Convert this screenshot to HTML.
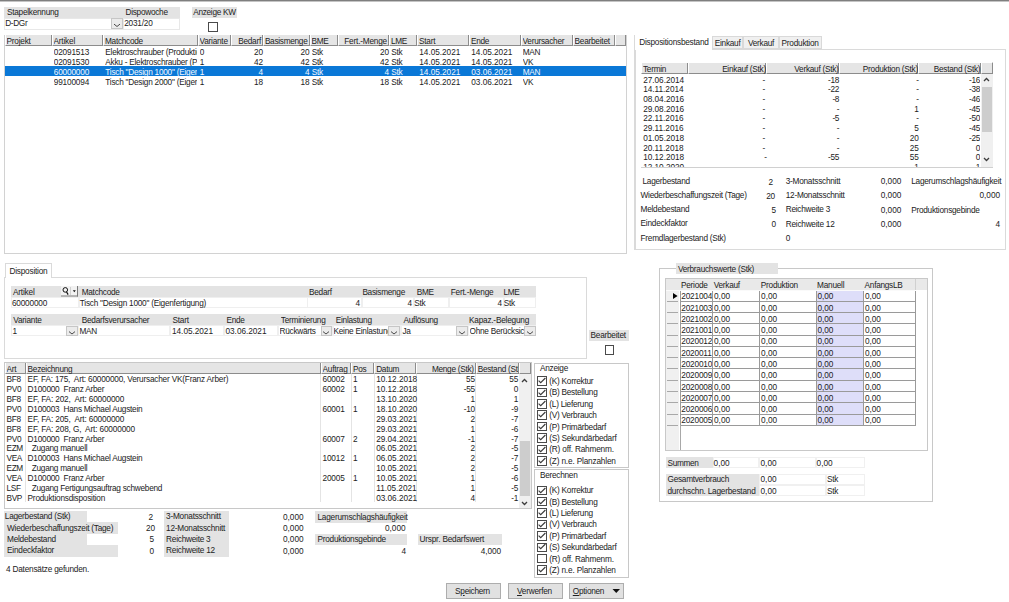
<!DOCTYPE html>
<html><head><meta charset="utf-8"><title>Disposition</title>
<style>
html,body{margin:0;padding:0;background:#fff;width:1009px;height:602px;overflow:hidden;position:relative;}
.r{position:absolute;}
.t{position:absolute;white-space:nowrap;font-family:"Liberation Sans",sans-serif;font-size:8.25px;line-height:10px;color:#222;}
</style></head><body>
<div class="r" style="left:0px;top:0px;width:1009px;height:1px;background:#7f7f7f;"></div>
<div class="r" style="left:0px;top:1px;width:1009px;height:1px;background:#c4c4c4;"></div>
<div class="r" style="left:4px;top:7px;width:176px;height:11px;background:#e3e3e3;"></div>
<div class="t" style="top:7.90px;left:7px;letter-spacing:-0.26px;">Stapelkennung</div>
<div class="t" style="top:7.90px;left:125.5px;letter-spacing:-0.27px;">Dispowoche</div>
<div class="r" style="left:4px;top:18px;width:119px;height:12px;background:#fff;border:1px solid #e8e8e8;box-sizing:border-box;"></div>
<div class="r" style="left:123px;top:18px;width:57px;height:12px;background:#fff;border:1px solid #e8e8e8;box-sizing:border-box;"></div>
<div class="r" style="left:111px;top:18px;width:12px;height:11px;background:#ebebeb;border:1px solid #c6c6c6;box-sizing:border-box;"></div>
<svg class="r" style="left:111px;top:18px" width="12" height="11"><path d="M3.00 6.10 L6.00 8.50 L9.00 6.10" fill="none" stroke="#4a4a4a" stroke-width="1.0"/></svg>
<div class="t" style="top:19.10px;left:5.2px;letter-spacing:-0.33px;">D-DGr</div>
<div class="t" style="top:19.10px;left:124.2px;letter-spacing:-0.20px;">2031/20</div>
<div class="r" style="left:192px;top:7px;width:45px;height:11px;background:#e3e3e3;"></div>
<div class="t" style="top:7.90px;left:193.2px;letter-spacing:-0.28px;">Anzeige KW</div>
<div class="r" style="left:208px;top:22px;width:10px;height:10px;background:#fff;border:1px solid #4a4a4a;box-sizing:border-box;"></div>
<div class="r" style="left:4px;top:35px;width:623px;height:219px;background:#fff;border:1px solid #d2d2d2;box-sizing:border-box;border-top:none;"></div>
<div class="r" style="left:5px;top:35px;width:47px;height:11px;background:#e5e5e5;border-right:1px solid #8c8c8c;border-bottom:1px solid #8c8c8c;border-left:1px solid #fff;box-sizing:border-box;"></div>
<div class="t" style="top:37.10px;left:6.5px;letter-spacing:-0.22px;width:44.0px;overflow:hidden;">Projekt</div>
<div class="r" style="left:52px;top:35px;width:51px;height:11px;background:#e5e5e5;border-right:1px solid #8c8c8c;border-bottom:1px solid #8c8c8c;border-left:1px solid #fff;box-sizing:border-box;"></div>
<div class="t" style="top:37.10px;left:53.5px;letter-spacing:-0.20px;width:48.5px;overflow:hidden;">Artikel</div>
<div class="r" style="left:103px;top:35px;width:95px;height:11px;background:#e5e5e5;border-right:1px solid #8c8c8c;border-bottom:1px solid #8c8c8c;border-left:1px solid #fff;box-sizing:border-box;"></div>
<div class="t" style="top:37.10px;left:105px;letter-spacing:-0.27px;width:91.5px;overflow:hidden;">Matchcode</div>
<div class="r" style="left:198px;top:35px;width:33px;height:11px;background:#e5e5e5;border-right:1px solid #8c8c8c;border-bottom:1px solid #8c8c8c;border-left:1px solid #fff;box-sizing:border-box;"></div>
<div class="t" style="top:37.10px;left:199.5px;letter-spacing:-0.23px;width:30.5px;overflow:hidden;">Variante</div>
<div class="r" style="left:231px;top:35px;width:32px;height:11px;background:#e5e5e5;border-right:1px solid #8c8c8c;border-bottom:1px solid #8c8c8c;border-left:1px solid #fff;box-sizing:border-box;"></div>
<div class="t" style="top:37.10px;left:229.00px;width:32px;text-align:right;letter-spacing:-0.25px;">Bedarf</div>
<div class="r" style="left:263px;top:35px;width:47px;height:11px;background:#e5e5e5;border-right:1px solid #8c8c8c;border-bottom:1px solid #8c8c8c;border-left:1px solid #fff;box-sizing:border-box;"></div>
<div class="t" style="top:37.10px;left:261.00px;width:46.5px;text-align:right;letter-spacing:-0.28px;">Basismenge</div>
<div class="r" style="left:310px;top:35px;width:28px;height:11px;background:#e5e5e5;border-right:1px solid #8c8c8c;border-bottom:1px solid #8c8c8c;border-left:1px solid #fff;box-sizing:border-box;"></div>
<div class="t" style="top:37.10px;left:311.5px;letter-spacing:-0.36px;width:25.0px;overflow:hidden;">BME</div>
<div class="r" style="left:338px;top:35px;width:51px;height:11px;background:#e5e5e5;border-right:1px solid #8c8c8c;border-bottom:1px solid #8c8c8c;border-left:1px solid #fff;box-sizing:border-box;"></div>
<div class="t" style="top:37.10px;left:335.50px;width:51.5px;text-align:right;letter-spacing:-0.20px;">Fert.-Menge</div>
<div class="r" style="left:389px;top:35px;width:28px;height:11px;background:#e5e5e5;border-right:1px solid #8c8c8c;border-bottom:1px solid #8c8c8c;border-left:1px solid #fff;box-sizing:border-box;"></div>
<div class="t" style="top:37.10px;left:391px;letter-spacing:-0.34px;width:25px;overflow:hidden;">LME</div>
<div class="r" style="left:417px;top:35px;width:52px;height:11px;background:#e5e5e5;border-right:1px solid #8c8c8c;border-bottom:1px solid #8c8c8c;border-left:1px solid #fff;box-sizing:border-box;"></div>
<div class="t" style="top:37.10px;left:419px;letter-spacing:-0.21px;width:49px;overflow:hidden;">Start</div>
<div class="r" style="left:469px;top:35px;width:52px;height:11px;background:#e5e5e5;border-right:1px solid #8c8c8c;border-bottom:1px solid #8c8c8c;border-left:1px solid #fff;box-sizing:border-box;"></div>
<div class="t" style="top:37.10px;left:471px;letter-spacing:-0.29px;width:48.5px;overflow:hidden;">Ende</div>
<div class="r" style="left:521px;top:35px;width:52px;height:11px;background:#e5e5e5;border-right:1px solid #8c8c8c;border-bottom:1px solid #8c8c8c;border-left:1px solid #fff;box-sizing:border-box;"></div>
<div class="t" style="top:37.10px;left:522.5px;letter-spacing:-0.25px;width:49.0px;overflow:hidden;">Verursacher</div>
<div class="r" style="left:573px;top:35px;width:42px;height:11px;background:#e5e5e5;border-right:1px solid #8c8c8c;border-bottom:1px solid #8c8c8c;border-left:1px solid #fff;box-sizing:border-box;"></div>
<div class="t" style="top:37.10px;left:574.5px;letter-spacing:-0.23px;width:39.5px;overflow:hidden;">Bearbeitet</div>
<div class="r" style="left:615px;top:35px;width:11px;height:11px;background:#e5e5e5;border-right:1px solid #8c8c8c;border-bottom:1px solid #8c8c8c;border-left:1px solid #fff;box-sizing:border-box;"></div>
<div class="t" style="top:48.00px;left:53.8px;letter-spacing:-0.18px;width:48.7px;overflow:hidden;">02091513</div>
<div class="t" style="top:48.00px;left:105.3px;letter-spacing:-0.25px;width:91.7px;overflow:hidden;">Elektroschrauber (Produktion)</div>
<div class="t" style="top:48.00px;left:199.8px;letter-spacing:-0.18px;width:30.7px;overflow:hidden;">0</div>
<div class="t" style="top:48.00px;left:232.80px;width:30px;text-align:right;letter-spacing:-0.18px;">20</div>
<div class="t" style="top:48.00px;left:264.80px;width:44.5px;text-align:right;letter-spacing:-0.18px;">20</div>
<div class="t" style="top:48.00px;left:311.8px;letter-spacing:-0.24px;width:25.2px;overflow:hidden;">Stk</div>
<div class="t" style="top:48.00px;left:339.30px;width:49.5px;text-align:right;letter-spacing:-0.18px;">20</div>
<div class="t" style="top:48.00px;left:391.3px;letter-spacing:-0.24px;width:25.2px;overflow:hidden;">Stk</div>
<div class="t" style="top:48.00px;left:419.3px;letter-spacing:-0.03px;width:49.2px;overflow:hidden;">14.05.2021</div>
<div class="t" style="top:48.00px;left:471.3px;letter-spacing:-0.03px;width:48.7px;overflow:hidden;">14.05.2021</div>
<div class="t" style="top:48.00px;left:522.8px;letter-spacing:-0.37px;width:49.2px;overflow:hidden;">MAN</div>
<div class="t" style="top:57.85px;left:53.8px;letter-spacing:-0.18px;width:48.7px;overflow:hidden;">02091530</div>
<div class="t" style="top:57.85px;left:105.3px;letter-spacing:-0.25px;width:91.7px;overflow:hidden;">Akku - Elektroschrauber (Produktion)</div>
<div class="t" style="top:57.85px;left:199.8px;letter-spacing:-0.18px;width:30.7px;overflow:hidden;">1</div>
<div class="t" style="top:57.85px;left:232.80px;width:30px;text-align:right;letter-spacing:-0.18px;">42</div>
<div class="t" style="top:57.85px;left:264.80px;width:44.5px;text-align:right;letter-spacing:-0.18px;">42</div>
<div class="t" style="top:57.85px;left:311.8px;letter-spacing:-0.24px;width:25.2px;overflow:hidden;">Stk</div>
<div class="t" style="top:57.85px;left:339.30px;width:49.5px;text-align:right;letter-spacing:-0.18px;">42</div>
<div class="t" style="top:57.85px;left:391.3px;letter-spacing:-0.24px;width:25.2px;overflow:hidden;">Stk</div>
<div class="t" style="top:57.85px;left:419.3px;letter-spacing:-0.03px;width:49.2px;overflow:hidden;">14.05.2021</div>
<div class="t" style="top:57.85px;left:471.3px;letter-spacing:-0.03px;width:48.7px;overflow:hidden;">14.05.2021</div>
<div class="t" style="top:57.85px;left:522.8px;letter-spacing:-0.34px;width:49.2px;overflow:hidden;">VK</div>
<div class="r" style="left:5px;top:66px;width:621px;height:10px;background:#0a78d7;"></div>
<div class="t" style="top:67.70px;left:53.8px;color:#f4f8ff;letter-spacing:-0.18px;width:48.7px;overflow:hidden;">60000000</div>
<div class="t" style="top:67.70px;left:105.3px;color:#f4f8ff;letter-spacing:-0.24px;width:91.7px;overflow:hidden;">Tisch &quot;Design 1000&quot; (Eigenfertigung)</div>
<div class="t" style="top:67.70px;left:199.8px;color:#f4f8ff;letter-spacing:-0.18px;width:30.7px;overflow:hidden;">1</div>
<div class="t" style="top:67.70px;left:232.80px;width:30px;text-align:right;color:#f4f8ff;letter-spacing:-0.18px;">4</div>
<div class="t" style="top:67.70px;left:264.80px;width:44.5px;text-align:right;color:#f4f8ff;letter-spacing:-0.18px;">4</div>
<div class="t" style="top:67.70px;left:311.8px;color:#f4f8ff;letter-spacing:-0.24px;width:25.2px;overflow:hidden;">Stk</div>
<div class="t" style="top:67.70px;left:339.30px;width:49.5px;text-align:right;color:#f4f8ff;letter-spacing:-0.18px;">4</div>
<div class="t" style="top:67.70px;left:391.3px;color:#f4f8ff;letter-spacing:-0.24px;width:25.2px;overflow:hidden;">Stk</div>
<div class="t" style="top:67.70px;left:419.3px;color:#f4f8ff;letter-spacing:-0.03px;width:49.2px;overflow:hidden;">14.05.2021</div>
<div class="t" style="top:67.70px;left:471.3px;color:#f4f8ff;letter-spacing:-0.03px;width:48.7px;overflow:hidden;">03.06.2021</div>
<div class="t" style="top:67.70px;left:522.8px;color:#f4f8ff;letter-spacing:-0.37px;width:49.2px;overflow:hidden;">MAN</div>
<div class="t" style="top:77.55px;left:53.8px;letter-spacing:-0.18px;width:48.7px;overflow:hidden;">99100094</div>
<div class="t" style="top:77.55px;left:105.3px;letter-spacing:-0.24px;width:91.7px;overflow:hidden;">Tisch &quot;Design 2000&quot; (Eigenfertigung)</div>
<div class="t" style="top:77.55px;left:199.8px;letter-spacing:-0.18px;width:30.7px;overflow:hidden;">1</div>
<div class="t" style="top:77.55px;left:232.80px;width:30px;text-align:right;letter-spacing:-0.18px;">18</div>
<div class="t" style="top:77.55px;left:264.80px;width:44.5px;text-align:right;letter-spacing:-0.18px;">18</div>
<div class="t" style="top:77.55px;left:311.8px;letter-spacing:-0.24px;width:25.2px;overflow:hidden;">Stk</div>
<div class="t" style="top:77.55px;left:339.30px;width:49.5px;text-align:right;letter-spacing:-0.18px;">18</div>
<div class="t" style="top:77.55px;left:391.3px;letter-spacing:-0.24px;width:25.2px;overflow:hidden;">Stk</div>
<div class="t" style="top:77.55px;left:419.3px;letter-spacing:-0.03px;width:49.2px;overflow:hidden;">14.05.2021</div>
<div class="t" style="top:77.55px;left:471.3px;letter-spacing:-0.03px;width:48.7px;overflow:hidden;">03.06.2021</div>
<div class="t" style="top:77.55px;left:522.8px;letter-spacing:-0.34px;width:49.2px;overflow:hidden;">VK</div>
<div class="r" style="left:635px;top:49px;width:371px;height:201px;background:#fff;border:1px solid #dadada;box-sizing:border-box;"></div>
<div class="r" style="left:635px;top:49px;width:77px;height:1px;background:#fff;"></div>
<div class="r" style="left:634px;top:35px;width:1px;height:215px;background:#dadada;"></div>
<div class="t" style="top:38.10px;left:639.3px;letter-spacing:-0.24px;">Dispositionsbestand</div>
<div class="r" style="left:712px;top:36px;width:31px;height:13px;background:#f0f0f0;border:1px solid #d9d9d9;box-sizing:border-box;"></div>
<div class="t" style="top:39.10px;left:711.8px;width:31.600000000000023px;text-align:center;letter-spacing:-0.24px;">Einkauf</div>
<div class="r" style="left:743px;top:36px;width:36px;height:13px;background:#f0f0f0;border:1px solid #d9d9d9;box-sizing:border-box;"></div>
<div class="t" style="top:39.10px;left:743.3999999999999px;width:35.30000000000007px;text-align:center;letter-spacing:-0.25px;">Verkauf</div>
<div class="r" style="left:779px;top:36px;width:43px;height:13px;background:#f0f0f0;border:1px solid #d9d9d9;box-sizing:border-box;"></div>
<div class="t" style="top:39.10px;left:778.7px;width:42.799999999999955px;text-align:center;letter-spacing:-0.24px;">Produktion</div>
<div class="r" style="left:641px;top:62px;width:352px;height:106px;background:#fff;border:1px solid #d0d0d0;box-sizing:border-box;border-left:none;border-top:none;"></div>
<div class="r" style="left:641px;top:63px;width:47px;height:11px;background:#e5e5e5;border-right:1px solid #8c8c8c;border-bottom:1px solid #8c8c8c;border-left:1px solid #fff;box-sizing:border-box;"></div>
<div class="t" style="top:64.60px;left:643px;letter-spacing:-0.26px;width:43.5px;overflow:hidden;">Termin</div>
<div class="r" style="left:688px;top:63px;width:78px;height:11px;background:#e5e5e5;border-right:1px solid #8c8c8c;border-bottom:1px solid #8c8c8c;border-left:1px solid #fff;box-sizing:border-box;"></div>
<div class="t" style="top:64.60px;left:687.10px;width:78.89999999999998px;text-align:right;letter-spacing:-0.26px;">Einkauf (Stk)</div>
<div class="r" style="left:766px;top:63px;width:73px;height:11px;background:#e5e5e5;border-right:1px solid #8c8c8c;border-bottom:1px solid #8c8c8c;border-left:1px solid #fff;box-sizing:border-box;"></div>
<div class="t" style="top:64.60px;left:766.00px;width:72.60000000000002px;text-align:right;letter-spacing:-0.26px;">Verkauf (Stk)</div>
<div class="r" style="left:839px;top:63px;width:79px;height:11px;background:#e5e5e5;border-right:1px solid #8c8c8c;border-bottom:1px solid #8c8c8c;border-left:1px solid #fff;box-sizing:border-box;"></div>
<div class="t" style="top:64.60px;left:838.60px;width:79.39999999999998px;text-align:right;letter-spacing:-0.25px;">Produktion (Stk)</div>
<div class="r" style="left:918px;top:63px;width:63px;height:11px;background:#e5e5e5;border-right:1px solid #8c8c8c;border-bottom:1px solid #8c8c8c;border-left:1px solid #fff;box-sizing:border-box;"></div>
<div class="t" style="top:64.60px;left:918.00px;width:62.30000000000007px;text-align:right;letter-spacing:-0.27px;">Bestand (Stk)</div>
<div class="r" style="left:981px;top:63px;width:12px;height:11px;background:#e5e5e5;border-right:1px solid #8c8c8c;border-bottom:1px solid #8c8c8c;border-left:1px solid #fff;box-sizing:border-box;"></div>
<div class="r" style="left:981px;top:74px;width:12px;height:93px;background:#f0f0f0;"></div>
<div class="r" style="left:982px;top:87px;width:10px;height:45px;background:#cdcdcd;"></div>
<svg class="r" style="left:981px;top:75px" width="11" height="10"><path d="M3 6 L5.5 3.5 L8 6" fill="none" stroke="#3c3c3c" stroke-width="1.3"/></svg>
<svg class="r" style="left:981px;top:154px" width="11" height="10"><path d="M3 4 L5.5 6.5 L8 4" fill="none" stroke="#3c3c3c" stroke-width="1.3"/></svg>
<div class="r" style="left:641px;top:73.5px;width:339px;height:93.5px;overflow:hidden;">
<div class="t" style="top:2.00px;left:2.2px;letter-spacing:-0.03px;">27.06.2014</div>
<div class="t" style="top:2.00px;left:47.90px;width:75.89999999999998px;text-align:right;letter-spacing:-0.36px;">-</div>
<div class="t" style="top:2.00px;left:128.60px;width:69.60000000000002px;text-align:right;letter-spacing:-0.24px;">-18</div>
<div class="t" style="top:2.00px;left:201.20px;width:76.39999999999998px;text-align:right;letter-spacing:-0.36px;">-</div>
<div class="t" style="top:2.00px;left:279.90px;width:59.30000000000007px;text-align:right;letter-spacing:-0.24px;">-16</div>
<div class="t" style="top:11.72px;left:2.2px;letter-spacing:-0.03px;">14.11.2014</div>
<div class="t" style="top:11.72px;left:47.90px;width:75.89999999999998px;text-align:right;letter-spacing:-0.36px;">-</div>
<div class="t" style="top:11.72px;left:128.60px;width:69.60000000000002px;text-align:right;letter-spacing:-0.24px;">-22</div>
<div class="t" style="top:11.72px;left:201.20px;width:76.39999999999998px;text-align:right;letter-spacing:-0.36px;">-</div>
<div class="t" style="top:11.72px;left:279.90px;width:59.30000000000007px;text-align:right;letter-spacing:-0.24px;">-38</div>
<div class="t" style="top:21.45px;left:2.2px;letter-spacing:-0.03px;">08.04.2016</div>
<div class="t" style="top:21.45px;left:47.90px;width:75.89999999999998px;text-align:right;letter-spacing:-0.36px;">-</div>
<div class="t" style="top:21.45px;left:128.60px;width:69.60000000000002px;text-align:right;letter-spacing:-0.27px;">-8</div>
<div class="t" style="top:21.45px;left:201.20px;width:76.39999999999998px;text-align:right;letter-spacing:-0.36px;">-</div>
<div class="t" style="top:21.45px;left:279.90px;width:59.30000000000007px;text-align:right;letter-spacing:-0.24px;">-46</div>
<div class="t" style="top:31.18px;left:2.2px;letter-spacing:-0.03px;">29.08.2016</div>
<div class="t" style="top:31.18px;left:47.90px;width:75.89999999999998px;text-align:right;letter-spacing:-0.36px;">-</div>
<div class="t" style="top:31.18px;left:128.60px;width:69.60000000000002px;text-align:right;letter-spacing:-0.36px;">-</div>
<div class="t" style="top:31.18px;left:201.20px;width:76.39999999999998px;text-align:right;letter-spacing:-0.18px;">1</div>
<div class="t" style="top:31.18px;left:279.90px;width:59.30000000000007px;text-align:right;letter-spacing:-0.24px;">-45</div>
<div class="t" style="top:40.90px;left:2.2px;letter-spacing:-0.03px;">22.11.2016</div>
<div class="t" style="top:40.90px;left:47.90px;width:75.89999999999998px;text-align:right;letter-spacing:-0.36px;">-</div>
<div class="t" style="top:40.90px;left:128.60px;width:69.60000000000002px;text-align:right;letter-spacing:-0.27px;">-5</div>
<div class="t" style="top:40.90px;left:201.20px;width:76.39999999999998px;text-align:right;letter-spacing:-0.36px;">-</div>
<div class="t" style="top:40.90px;left:279.90px;width:59.30000000000007px;text-align:right;letter-spacing:-0.24px;">-50</div>
<div class="t" style="top:50.63px;left:2.2px;letter-spacing:-0.03px;">29.11.2016</div>
<div class="t" style="top:50.63px;left:47.90px;width:75.89999999999998px;text-align:right;letter-spacing:-0.36px;">-</div>
<div class="t" style="top:50.63px;left:128.60px;width:69.60000000000002px;text-align:right;letter-spacing:-0.36px;">-</div>
<div class="t" style="top:50.63px;left:201.20px;width:76.39999999999998px;text-align:right;letter-spacing:-0.18px;">5</div>
<div class="t" style="top:50.63px;left:279.90px;width:59.30000000000007px;text-align:right;letter-spacing:-0.24px;">-45</div>
<div class="t" style="top:60.35px;left:2.2px;letter-spacing:-0.03px;">01.05.2018</div>
<div class="t" style="top:60.35px;left:47.90px;width:75.89999999999998px;text-align:right;letter-spacing:-0.36px;">-</div>
<div class="t" style="top:60.35px;left:128.60px;width:69.60000000000002px;text-align:right;letter-spacing:-0.36px;">-</div>
<div class="t" style="top:60.35px;left:201.20px;width:76.39999999999998px;text-align:right;letter-spacing:-0.18px;">20</div>
<div class="t" style="top:60.35px;left:279.90px;width:59.30000000000007px;text-align:right;letter-spacing:-0.24px;">-25</div>
<div class="t" style="top:70.08px;left:2.2px;letter-spacing:-0.03px;">20.11.2018</div>
<div class="t" style="top:70.08px;left:47.90px;width:75.89999999999998px;text-align:right;letter-spacing:-0.36px;">-</div>
<div class="t" style="top:70.08px;left:128.60px;width:69.60000000000002px;text-align:right;letter-spacing:-0.36px;">-</div>
<div class="t" style="top:70.08px;left:201.20px;width:76.39999999999998px;text-align:right;letter-spacing:-0.18px;">25</div>
<div class="t" style="top:70.08px;left:279.90px;width:59.30000000000007px;text-align:right;letter-spacing:-0.18px;">0</div>
<div class="t" style="top:79.80px;left:2.2px;letter-spacing:-0.03px;">10.12.2018</div>
<div class="t" style="top:79.80px;left:49.70px;width:75.89999999999998px;text-align:right;letter-spacing:-0.36px;">-</div>
<div class="t" style="top:79.80px;left:128.60px;width:69.60000000000002px;text-align:right;letter-spacing:-0.24px;">-55</div>
<div class="t" style="top:79.80px;left:201.20px;width:76.39999999999998px;text-align:right;letter-spacing:-0.18px;">55</div>
<div class="t" style="top:79.80px;left:279.90px;width:59.30000000000007px;text-align:right;letter-spacing:-0.18px;">0</div>
<div class="t" style="top:89.53px;left:2.2px;letter-spacing:-0.03px;">12.10.2020</div>
<div class="t" style="top:89.53px;left:47.90px;width:75.89999999999998px;text-align:right;letter-spacing:-0.36px;">-</div>
<div class="t" style="top:89.53px;left:128.60px;width:69.60000000000002px;text-align:right;letter-spacing:-0.36px;">-</div>
<div class="t" style="top:89.53px;left:201.20px;width:76.39999999999998px;text-align:right;letter-spacing:-0.18px;">1</div>
<div class="t" style="top:89.53px;left:279.90px;width:59.30000000000007px;text-align:right;letter-spacing:-0.18px;">1</div>
</div>
<div class="t" style="top:176.80px;left:642.5px;letter-spacing:-0.26px;">Lagerbestand</div>
<div class="t" style="top:190.90px;left:640.6px;letter-spacing:-0.26px;">Wiederbeschaffungszeit (Tage)</div>
<div class="t" style="top:205.20px;left:640.6px;letter-spacing:-0.26px;">Meldebestand</div>
<div class="t" style="top:219.10px;left:640.6px;letter-spacing:-0.23px;">Eindeckfaktor</div>
<div class="t" style="top:233.60px;left:640.6px;letter-spacing:-0.26px;">Fremdlagerbestand (Stk)</div>
<div class="t" style="top:177.60px;left:743.00px;width:30px;text-align:right;letter-spacing:-0.18px;">2</div>
<div class="t" style="top:191.60px;left:745.00px;width:30px;text-align:right;letter-spacing:-0.18px;">20</div>
<div class="t" style="top:205.90px;left:746.00px;width:30px;text-align:right;letter-spacing:-0.18px;">5</div>
<div class="t" style="top:219.70px;left:746.00px;width:30px;text-align:right;letter-spacing:-0.18px;">0</div>
<div class="t" style="top:177.00px;left:785.7px;letter-spacing:-0.24px;">3-Monatsschnitt</div>
<div class="t" style="top:190.60px;left:785.7px;letter-spacing:-0.24px;">12-Monatsschnitt</div>
<div class="t" style="top:205.40px;left:785.7px;letter-spacing:-0.24px;">Reichweite 3</div>
<div class="t" style="top:219.70px;left:785.7px;letter-spacing:-0.23px;">Reichweite 12</div>
<div class="t" style="top:234.20px;left:785.7px;letter-spacing:-0.18px;">0</div>
<div class="t" style="top:177.30px;left:861.30px;width:40px;text-align:right;letter-spacing:-0.03px;">0,000</div>
<div class="t" style="top:191.10px;left:861.30px;width:40px;text-align:right;letter-spacing:-0.03px;">0,000</div>
<div class="t" style="top:205.90px;left:861.30px;width:40px;text-align:right;letter-spacing:-0.03px;">0,000</div>
<div class="t" style="top:220.10px;left:861.30px;width:40px;text-align:right;letter-spacing:-0.03px;">0,000</div>
<div class="t" style="top:177.00px;left:911.2px;letter-spacing:-0.24px;">Lagerumschlagshäufigkeit</div>
<div class="t" style="top:191.10px;left:960.00px;width:40px;text-align:right;letter-spacing:-0.03px;">0,000</div>
<div class="t" style="top:205.60px;left:911.2px;letter-spacing:-0.25px;">Produktionsgebinde</div>
<div class="t" style="top:219.90px;left:960.00px;width:40px;text-align:right;letter-spacing:-0.18px;">4</div>
<div class="r" style="left:4px;top:277px;width:583px;height:82px;background:#fff;border:1px solid #dadada;box-sizing:border-box;"></div>
<div class="r" style="left:5px;top:263px;width:47px;height:15px;background:#fff;border:1px solid #dadada;border-bottom:none;box-sizing:border-box;"></div>
<div class="t" style="top:266.90px;left:9.5px;letter-spacing:-0.22px;">Disposition</div>
<div class="r" style="left:11px;top:286px;width:525px;height:11px;background:#e3e3e3;"></div>
<div class="t" style="top:287.50px;left:13px;letter-spacing:-0.20px;">Artikel</div>
<svg class="r" style="left:61px;top:286px" width="18" height="11"><rect x="0" y="0" width="17" height="10.5" fill="#f2f2f2"/><path d="M16.5 0 V10.5 M0 10 H17" stroke="#7a7a7a" stroke-width="1" fill="none"/><path d="M9.5 1 V9" stroke="#d0d0d0" stroke-width="1"/><circle cx="4.3" cy="3.9" r="2.3" fill="none" stroke="#111" stroke-width="1"/><path d="M5.5 5.7 L7.1 8.6" stroke="#111" stroke-width="1.2"/><path d="M11.8 4.2 L14.8 4.2 L13.3 6.3 Z" fill="#111"/></svg>
<div class="t" style="top:287.50px;left:81.7px;letter-spacing:-0.27px;">Matchcode</div>
<div class="t" style="top:287.50px;left:309px;letter-spacing:-0.25px;">Bedarf</div>
<div class="t" style="top:287.50px;left:362.4px;letter-spacing:-0.28px;">Basismenge</div>
<div class="t" style="top:287.50px;left:416.8px;letter-spacing:-0.36px;">BME</div>
<div class="t" style="top:287.50px;left:450.7px;letter-spacing:-0.20px;">Fert.-Menge</div>
<div class="t" style="top:287.50px;left:503.5px;letter-spacing:-0.34px;">LME</div>
<div class="r" style="left:11px;top:297px;width:68px;height:11px;background:#fff;border:1px solid #efefef;box-sizing:border-box;"></div>
<div class="r" style="left:79px;top:297px;width:229px;height:11px;background:#fff;border:1px solid #efefef;box-sizing:border-box;"></div>
<div class="r" style="left:307px;top:297px;width:55px;height:11px;background:#fff;border:1px solid #efefef;box-sizing:border-box;"></div>
<div class="r" style="left:362px;top:297px;width:52px;height:11px;background:#fff;border:1px solid #efefef;box-sizing:border-box;"></div>
<div class="r" style="left:414px;top:297px;width:35px;height:11px;background:#fff;border:1px solid #efefef;box-sizing:border-box;"></div>
<div class="r" style="left:449px;top:297px;width:55px;height:11px;background:#fff;border:1px solid #efefef;box-sizing:border-box;"></div>
<div class="r" style="left:504px;top:297px;width:32px;height:11px;background:#fff;border:1px solid #efefef;box-sizing:border-box;"></div>
<div class="t" style="top:298.70px;left:11.9px;letter-spacing:-0.18px;">60000000</div>
<div class="t" style="top:298.70px;left:79.8px;letter-spacing:-0.24px;">Tisch &quot;Design 1000&quot; (Eigenfertigung)</div>
<div class="t" style="top:298.70px;left:320.00px;width:40px;text-align:right;letter-spacing:-0.18px;">4</div>
<div class="t" style="top:298.70px;left:372.00px;width:40px;text-align:right;letter-spacing:-0.18px;">4</div>
<div class="t" style="top:298.70px;left:414.2px;letter-spacing:-0.24px;">Stk</div>
<div class="t" style="top:298.70px;left:462.00px;width:40px;text-align:right;letter-spacing:-0.18px;">4</div>
<div class="t" style="top:298.70px;left:503.8px;letter-spacing:-0.24px;">Stk</div>
<div class="r" style="left:11px;top:314px;width:525px;height:11px;background:#e3e3e3;"></div>
<div class="t" style="top:316.00px;left:13.3px;letter-spacing:-0.23px;">Variante</div>
<div class="t" style="top:316.00px;left:81.7px;letter-spacing:-0.24px;">Bedarfsverursacher</div>
<div class="t" style="top:316.00px;left:172.5px;letter-spacing:-0.21px;">Start</div>
<div class="t" style="top:316.00px;left:226.5px;letter-spacing:-0.29px;">Ende</div>
<div class="t" style="top:316.00px;left:280.8px;letter-spacing:-0.25px;width:53px;overflow:hidden;">Terminierung</div>
<div class="t" style="top:316.00px;left:335.7px;letter-spacing:-0.24px;">Einlastung</div>
<div class="t" style="top:316.00px;left:403.5px;letter-spacing:-0.25px;">Auflösung</div>
<div class="t" style="top:316.00px;left:469px;letter-spacing:-0.22px;">Kapaz.-Belegung</div>
<div class="r" style="left:11px;top:325px;width:67px;height:11px;background:#fff;border:1px solid #efefef;box-sizing:border-box;"></div>
<div class="r" style="left:78px;top:325px;width:92px;height:11px;background:#fff;border:1px solid #efefef;box-sizing:border-box;"></div>
<div class="r" style="left:170px;top:325px;width:54px;height:11px;background:#fff;border:1px solid #efefef;box-sizing:border-box;"></div>
<div class="r" style="left:224px;top:325px;width:54px;height:11px;background:#fff;border:1px solid #efefef;box-sizing:border-box;"></div>
<div class="r" style="left:278px;top:325px;width:55px;height:11px;background:#fff;border:1px solid #efefef;box-sizing:border-box;"></div>
<div class="r" style="left:333px;top:325px;width:68px;height:11px;background:#fff;border:1px solid #efefef;box-sizing:border-box;"></div>
<div class="r" style="left:401px;top:325px;width:67px;height:11px;background:#fff;border:1px solid #efefef;box-sizing:border-box;"></div>
<div class="r" style="left:468px;top:325px;width:68px;height:11px;background:#fff;border:1px solid #efefef;box-sizing:border-box;"></div>
<div class="t" style="top:327.10px;left:12.5px;letter-spacing:-0.18px;">1</div>
<div class="t" style="top:327.10px;left:79.5px;letter-spacing:-0.37px;">MAN</div>
<div class="t" style="top:327.10px;left:172px;letter-spacing:-0.03px;">14.05.2021</div>
<div class="t" style="top:327.10px;left:225.5px;letter-spacing:-0.03px;">03.06.2021</div>
<div class="t" style="top:327.10px;left:279.5px;letter-spacing:-0.26px;width:40px;overflow:hidden;">Rückwärts</div>
<div class="t" style="top:327.10px;left:333.5px;letter-spacing:-0.24px;width:55px;overflow:hidden;">Keine Einlastung</div>
<div class="t" style="top:327.10px;left:402.5px;letter-spacing:-0.27px;">Ja</div>
<div class="t" style="top:327.10px;left:469.5px;letter-spacing:-0.25px;width:54.5px;overflow:hidden;">Ohne Berücksichtigung</div>
<div class="r" style="left:66px;top:326px;width:12px;height:10px;background:#ebebeb;border:1px solid #c6c6c6;box-sizing:border-box;"></div>
<svg class="r" style="left:66px;top:326px" width="12" height="10"><path d="M3.00 5.60 L6.00 8.00 L9.00 5.60" fill="none" stroke="#4a4a4a" stroke-width="1.0"/></svg>
<div class="r" style="left:321px;top:326px;width:11px;height:10px;background:#ebebeb;border:1px solid #c6c6c6;box-sizing:border-box;"></div>
<svg class="r" style="left:320px;top:326px" width="12" height="10"><path d="M3.00 5.60 L6.00 8.00 L9.00 5.60" fill="none" stroke="#4a4a4a" stroke-width="1.0"/></svg>
<div class="r" style="left:388px;top:326px;width:12px;height:10px;background:#ebebeb;border:1px solid #c6c6c6;box-sizing:border-box;"></div>
<svg class="r" style="left:388px;top:326px" width="12" height="10"><path d="M3.00 5.60 L6.00 8.00 L9.00 5.60" fill="none" stroke="#4a4a4a" stroke-width="1.0"/></svg>
<div class="r" style="left:456px;top:326px;width:12px;height:10px;background:#ebebeb;border:1px solid #c6c6c6;box-sizing:border-box;"></div>
<svg class="r" style="left:456px;top:326px" width="12" height="10"><path d="M3.00 5.60 L6.00 8.00 L9.00 5.60" fill="none" stroke="#4a4a4a" stroke-width="1.0"/></svg>
<div class="r" style="left:524px;top:326px;width:12px;height:10px;background:#ebebeb;border:1px solid #c6c6c6;box-sizing:border-box;"></div>
<svg class="r" style="left:524px;top:326px" width="12" height="10"><path d="M3.00 5.60 L6.00 8.00 L9.00 5.60" fill="none" stroke="#4a4a4a" stroke-width="1.0"/></svg>
<div class="r" style="left:589px;top:330px;width:40px;height:11px;background:#e3e3e3;"></div>
<div class="t" style="top:331.40px;left:590.5px;letter-spacing:-0.23px;">Bearbeitet</div>
<div class="r" style="left:605px;top:345px;width:9px;height:10px;background:#fff;border:1px solid #4a4a4a;box-sizing:border-box;"></div>
<div class="r" style="left:4px;top:362px;width:528px;height:147px;background:#fff;border:1px solid #c8c8c8;box-sizing:border-box;"></div>
<div class="r" style="left:5px;top:363px;width:21px;height:11px;background:#e5e5e5;border-right:1px solid #8c8c8c;border-bottom:1px solid #8c8c8c;border-left:1px solid #fff;box-sizing:border-box;"></div>
<div class="t" style="top:364.70px;left:6.5px;letter-spacing:-0.21px;width:18.1px;overflow:hidden;">Art</div>
<div class="r" style="left:26px;top:363px;width:295px;height:11px;background:#e5e5e5;border-right:1px solid #8c8c8c;border-bottom:1px solid #8c8c8c;border-left:1px solid #fff;box-sizing:border-box;"></div>
<div class="t" style="top:364.70px;left:27.6px;letter-spacing:-0.26px;width:291.9px;overflow:hidden;">Bezeichnung</div>
<div class="r" style="left:321px;top:363px;width:30px;height:11px;background:#e5e5e5;border-right:1px solid #8c8c8c;border-bottom:1px solid #8c8c8c;border-left:1px solid #fff;box-sizing:border-box;"></div>
<div class="t" style="top:364.70px;left:322.5px;letter-spacing:-0.23px;width:27.5px;overflow:hidden;">Auftrag</div>
<div class="r" style="left:351px;top:363px;width:23px;height:11px;background:#e5e5e5;border-right:1px solid #8c8c8c;border-bottom:1px solid #8c8c8c;border-left:1px solid #fff;box-sizing:border-box;"></div>
<div class="t" style="top:364.70px;left:353px;letter-spacing:-0.29px;width:20.19999999999999px;overflow:hidden;">Pos</div>
<div class="r" style="left:374px;top:363px;width:42px;height:11px;background:#e5e5e5;border-right:1px solid #8c8c8c;border-bottom:1px solid #8c8c8c;border-left:1px solid #fff;box-sizing:border-box;"></div>
<div class="t" style="top:364.70px;left:376.2px;letter-spacing:-0.30px;width:39.19999999999999px;overflow:hidden;">Datum</div>
<div class="r" style="left:416px;top:363px;width:60px;height:11px;background:#e5e5e5;border-right:1px solid #8c8c8c;border-bottom:1px solid #8c8c8c;border-left:1px solid #fff;box-sizing:border-box;"></div>
<div class="t" style="top:364.70px;left:414.40px;width:59.30000000000001px;text-align:right;letter-spacing:-0.29px;">Menge (Stk)</div>
<div class="r" style="left:476px;top:363px;width:43px;height:11px;background:#e5e5e5;border-right:1px solid #8c8c8c;border-bottom:1px solid #8c8c8c;border-left:1px solid #fff;box-sizing:border-box;"></div>
<div class="t" style="top:364.70px;left:477.7px;letter-spacing:-0.27px;width:40.19999999999999px;overflow:hidden;">Bestand (Stk)</div>
<div class="r" style="left:519px;top:363px;width:12px;height:11px;background:#e5e5e5;border-right:1px solid #8c8c8c;border-bottom:1px solid #8c8c8c;border-left:1px solid #fff;box-sizing:border-box;"></div>
<div class="r" style="left:25px;top:374px;width:1px;height:128px;background:#e4e4e4;"></div>
<div class="r" style="left:320px;top:374px;width:1px;height:128px;background:#e4e4e4;"></div>
<div class="r" style="left:351px;top:374px;width:1px;height:128px;background:#e4e4e4;"></div>
<div class="r" style="left:374px;top:374px;width:1px;height:128px;background:#e4e4e4;"></div>
<div class="r" style="left:416px;top:374px;width:1px;height:128px;background:#e4e4e4;"></div>
<div class="r" style="left:475px;top:374px;width:1px;height:128px;background:#e4e4e4;"></div>
<div class="t" style="top:375.00px;left:6.5px;letter-spacing:-0.28px;white-space:pre;">BF8</div>
<div class="t" style="top:375.00px;left:27.6px;letter-spacing:-0.20px;white-space:pre;">EF, FA: 175,  Art: 60000000, Verursacher VK(Franz Arber)</div>
<div class="t" style="top:375.00px;left:322.5px;letter-spacing:-0.18px;white-space:pre;">60002</div>
<div class="t" style="top:375.00px;left:353px;letter-spacing:-0.18px;white-space:pre;">1</div>
<div class="t" style="top:375.00px;left:376.2px;letter-spacing:-0.03px;white-space:pre;">10.12.2018</div>
<div class="t" style="top:375.00px;left:418.60px;width:56.30000000000001px;text-align:right;letter-spacing:-0.18px;">55</div>
<div class="t" style="top:375.00px;left:477.90px;width:40.19999999999999px;text-align:right;letter-spacing:-0.18px;">55</div>
<div class="t" style="top:384.92px;left:6.5px;letter-spacing:-0.28px;white-space:pre;">PV0</div>
<div class="t" style="top:384.92px;left:27.6px;letter-spacing:-0.23px;white-space:pre;">D100000  Franz Arber</div>
<div class="t" style="top:384.92px;left:322.5px;letter-spacing:-0.18px;white-space:pre;">60002</div>
<div class="t" style="top:384.92px;left:353px;letter-spacing:-0.18px;white-space:pre;">1</div>
<div class="t" style="top:384.92px;left:376.2px;letter-spacing:-0.03px;white-space:pre;">10.12.2018</div>
<div class="t" style="top:384.92px;left:418.60px;width:56.30000000000001px;text-align:right;letter-spacing:-0.24px;">-55</div>
<div class="t" style="top:384.92px;left:477.90px;width:40.19999999999999px;text-align:right;letter-spacing:-0.18px;">0</div>
<div class="t" style="top:394.84px;left:6.5px;letter-spacing:-0.28px;white-space:pre;">BF8</div>
<div class="t" style="top:394.84px;left:27.6px;letter-spacing:-0.16px;white-space:pre;">EF, FA: 202,  Art: 60000000</div>
<div class="t" style="top:394.84px;left:376.2px;letter-spacing:-0.03px;white-space:pre;">13.10.2020</div>
<div class="t" style="top:394.84px;left:418.60px;width:56.30000000000001px;text-align:right;letter-spacing:-0.18px;">1</div>
<div class="t" style="top:394.84px;left:477.90px;width:40.19999999999999px;text-align:right;letter-spacing:-0.18px;">1</div>
<div class="t" style="top:404.76px;left:6.5px;letter-spacing:-0.28px;white-space:pre;">PV0</div>
<div class="t" style="top:404.76px;left:27.6px;letter-spacing:-0.24px;white-space:pre;">D100003  Hans Michael Augstein</div>
<div class="t" style="top:404.76px;left:322.5px;letter-spacing:-0.18px;white-space:pre;">60001</div>
<div class="t" style="top:404.76px;left:353px;letter-spacing:-0.18px;white-space:pre;">1</div>
<div class="t" style="top:404.76px;left:376.2px;letter-spacing:-0.03px;white-space:pre;">18.10.2020</div>
<div class="t" style="top:404.76px;left:418.60px;width:56.30000000000001px;text-align:right;letter-spacing:-0.24px;">-10</div>
<div class="t" style="top:404.76px;left:477.90px;width:40.19999999999999px;text-align:right;letter-spacing:-0.27px;">-9</div>
<div class="t" style="top:414.68px;left:6.5px;letter-spacing:-0.28px;white-space:pre;">BF8</div>
<div class="t" style="top:414.68px;left:27.6px;letter-spacing:-0.16px;white-space:pre;">EF, FA: 205,  Art: 60000000</div>
<div class="t" style="top:414.68px;left:376.2px;letter-spacing:-0.03px;white-space:pre;">29.03.2021</div>
<div class="t" style="top:414.68px;left:418.60px;width:56.30000000000001px;text-align:right;letter-spacing:-0.18px;">2</div>
<div class="t" style="top:414.68px;left:477.90px;width:40.19999999999999px;text-align:right;letter-spacing:-0.27px;">-7</div>
<div class="t" style="top:424.60px;left:6.5px;letter-spacing:-0.28px;white-space:pre;">BF8</div>
<div class="t" style="top:424.60px;left:27.6px;letter-spacing:-0.15px;white-space:pre;">EF, FA: 208, G,  Art: 60000000</div>
<div class="t" style="top:424.60px;left:376.2px;letter-spacing:-0.03px;white-space:pre;">29.03.2021</div>
<div class="t" style="top:424.60px;left:418.60px;width:56.30000000000001px;text-align:right;letter-spacing:-0.18px;">1</div>
<div class="t" style="top:424.60px;left:477.90px;width:40.19999999999999px;text-align:right;letter-spacing:-0.27px;">-6</div>
<div class="t" style="top:434.52px;left:6.5px;letter-spacing:-0.28px;white-space:pre;">PV0</div>
<div class="t" style="top:434.52px;left:27.6px;letter-spacing:-0.23px;white-space:pre;">D100000  Franz Arber</div>
<div class="t" style="top:434.52px;left:322.5px;letter-spacing:-0.18px;white-space:pre;">60007</div>
<div class="t" style="top:434.52px;left:353px;letter-spacing:-0.18px;white-space:pre;">2</div>
<div class="t" style="top:434.52px;left:376.2px;letter-spacing:-0.03px;white-space:pre;">29.04.2021</div>
<div class="t" style="top:434.52px;left:418.60px;width:56.30000000000001px;text-align:right;letter-spacing:-0.27px;">-1</div>
<div class="t" style="top:434.52px;left:477.90px;width:40.19999999999999px;text-align:right;letter-spacing:-0.27px;">-7</div>
<div class="t" style="top:444.44px;left:6.5px;letter-spacing:-0.35px;white-space:pre;">EZM</div>
<div class="t" style="top:444.44px;left:27.6px;letter-spacing:-0.25px;white-space:pre;">  Zugang manuell</div>
<div class="t" style="top:444.44px;left:376.2px;letter-spacing:-0.03px;white-space:pre;">06.05.2021</div>
<div class="t" style="top:444.44px;left:418.60px;width:56.30000000000001px;text-align:right;letter-spacing:-0.18px;">2</div>
<div class="t" style="top:444.44px;left:477.90px;width:40.19999999999999px;text-align:right;letter-spacing:-0.27px;">-5</div>
<div class="t" style="top:454.36px;left:6.5px;letter-spacing:-0.34px;white-space:pre;">VEA</div>
<div class="t" style="top:454.36px;left:27.6px;letter-spacing:-0.24px;white-space:pre;">D100003  Hans Michael Augstein</div>
<div class="t" style="top:454.36px;left:322.5px;letter-spacing:-0.18px;white-space:pre;">10012</div>
<div class="t" style="top:454.36px;left:353px;letter-spacing:-0.18px;white-space:pre;">1</div>
<div class="t" style="top:454.36px;left:376.2px;letter-spacing:-0.03px;white-space:pre;">06.05.2021</div>
<div class="t" style="top:454.36px;left:418.60px;width:56.30000000000001px;text-align:right;letter-spacing:-0.18px;">2</div>
<div class="t" style="top:454.36px;left:477.90px;width:40.19999999999999px;text-align:right;letter-spacing:-0.27px;">-7</div>
<div class="t" style="top:464.28px;left:6.5px;letter-spacing:-0.35px;white-space:pre;">EZM</div>
<div class="t" style="top:464.28px;left:27.6px;letter-spacing:-0.25px;white-space:pre;">  Zugang manuell</div>
<div class="t" style="top:464.28px;left:376.2px;letter-spacing:-0.03px;white-space:pre;">10.05.2021</div>
<div class="t" style="top:464.28px;left:418.60px;width:56.30000000000001px;text-align:right;letter-spacing:-0.18px;">2</div>
<div class="t" style="top:464.28px;left:477.90px;width:40.19999999999999px;text-align:right;letter-spacing:-0.27px;">-5</div>
<div class="t" style="top:474.20px;left:6.5px;letter-spacing:-0.34px;white-space:pre;">VEA</div>
<div class="t" style="top:474.20px;left:27.6px;letter-spacing:-0.23px;white-space:pre;">D100000  Franz Arber</div>
<div class="t" style="top:474.20px;left:322.5px;letter-spacing:-0.18px;white-space:pre;">20005</div>
<div class="t" style="top:474.20px;left:353px;letter-spacing:-0.18px;white-space:pre;">1</div>
<div class="t" style="top:474.20px;left:376.2px;letter-spacing:-0.03px;white-space:pre;">10.05.2021</div>
<div class="t" style="top:474.20px;left:418.60px;width:56.30000000000001px;text-align:right;letter-spacing:-0.18px;">1</div>
<div class="t" style="top:474.20px;left:477.90px;width:40.19999999999999px;text-align:right;letter-spacing:-0.27px;">-6</div>
<div class="t" style="top:484.12px;left:6.5px;letter-spacing:-0.31px;white-space:pre;">LSF</div>
<div class="t" style="top:484.12px;left:27.6px;letter-spacing:-0.25px;white-space:pre;">  Zugang Fertigungsauftrag schwebend</div>
<div class="t" style="top:484.12px;left:376.2px;letter-spacing:-0.03px;white-space:pre;">11.05.2021</div>
<div class="t" style="top:484.12px;left:418.60px;width:56.30000000000001px;text-align:right;letter-spacing:-0.18px;">1</div>
<div class="t" style="top:484.12px;left:477.90px;width:40.19999999999999px;text-align:right;letter-spacing:-0.27px;">-5</div>
<div class="t" style="top:494.04px;left:6.5px;letter-spacing:-0.34px;white-space:pre;">BVP</div>
<div class="t" style="top:494.04px;left:27.6px;letter-spacing:-0.23px;white-space:pre;">Produktionsdisposition</div>
<div class="t" style="top:494.04px;left:376.2px;letter-spacing:-0.03px;white-space:pre;">03.06.2021</div>
<div class="t" style="top:494.04px;left:418.60px;width:56.30000000000001px;text-align:right;letter-spacing:-0.18px;">4</div>
<div class="t" style="top:494.04px;left:477.90px;width:40.19999999999999px;text-align:right;letter-spacing:-0.27px;">-1</div>
<div class="r" style="left:519px;top:374px;width:12px;height:134px;background:#f0f0f0;"></div>
<div class="r" style="left:520px;top:441px;width:10px;height:55px;background:#cdcdcd;"></div>
<svg class="r" style="left:519px;top:376px" width="11" height="10"><path d="M3 6 L5.5 3.5 L8 6" fill="none" stroke="#3c3c3c" stroke-width="1.3"/></svg>
<svg class="r" style="left:519px;top:498px" width="11" height="10"><path d="M3 4 L5.5 6.5 L8 4" fill="none" stroke="#3c3c3c" stroke-width="1.3"/></svg>
<div class="r" style="left:534px;top:363px;width:95px;height:105px;background:#fff;border:1px solid #c8c8c8;box-sizing:border-box;"></div>
<div class="t" style="top:363.70px;left:540px;letter-spacing:-0.26px;">Anzeige</div>
<div class="r" style="left:537px;top:376px;width:10px;height:10px;background:#fff;border:1px solid #4a4a4a;box-sizing:border-box;"></div>
<svg class="r" style="left:537px;top:376px" width="10" height="10" viewBox="0 0 10 10"><path d="M1.6 4.6 L3.7 6.7 L8.4 2.0" fill="none" stroke="#3a3a3a" stroke-width="1.15"/></svg>
<div class="t" style="top:376.90px;left:549.3px;letter-spacing:-0.25px;">(K) Korrektur</div>
<div class="r" style="left:537px;top:388px;width:10px;height:9px;background:#fff;border:1px solid #4a4a4a;box-sizing:border-box;"></div>
<svg class="r" style="left:537px;top:388px" width="10" height="10" viewBox="0 0 10 10"><path d="M1.6 4.6 L3.7 6.7 L8.4 2.0" fill="none" stroke="#3a3a3a" stroke-width="1.15"/></svg>
<div class="t" style="top:388.30px;left:549.3px;letter-spacing:-0.26px;">(B) Bestellung</div>
<div class="r" style="left:537px;top:399px;width:10px;height:10px;background:#fff;border:1px solid #4a4a4a;box-sizing:border-box;"></div>
<svg class="r" style="left:537px;top:399px" width="10" height="10" viewBox="0 0 10 10"><path d="M1.6 4.6 L3.7 6.7 L8.4 2.0" fill="none" stroke="#3a3a3a" stroke-width="1.15"/></svg>
<div class="t" style="top:399.70px;left:549.3px;letter-spacing:-0.25px;">(L) Lieferung</div>
<div class="r" style="left:537px;top:410px;width:10px;height:10px;background:#fff;border:1px solid #4a4a4a;box-sizing:border-box;"></div>
<svg class="r" style="left:537px;top:410px" width="10" height="10" viewBox="0 0 10 10"><path d="M1.6 4.6 L3.7 6.7 L8.4 2.0" fill="none" stroke="#3a3a3a" stroke-width="1.15"/></svg>
<div class="t" style="top:411.10px;left:549.3px;letter-spacing:-0.27px;">(V) Verbrauch</div>
<div class="r" style="left:537px;top:422px;width:10px;height:9px;background:#fff;border:1px solid #4a4a4a;box-sizing:border-box;"></div>
<svg class="r" style="left:537px;top:422px" width="10" height="10" viewBox="0 0 10 10"><path d="M1.6 4.6 L3.7 6.7 L8.4 2.0" fill="none" stroke="#3a3a3a" stroke-width="1.15"/></svg>
<div class="t" style="top:422.50px;left:549.3px;letter-spacing:-0.26px;">(P) Primärbedarf</div>
<div class="r" style="left:537px;top:433px;width:10px;height:10px;background:#fff;border:1px solid #4a4a4a;box-sizing:border-box;"></div>
<svg class="r" style="left:537px;top:433px" width="10" height="10" viewBox="0 0 10 10"><path d="M1.6 4.6 L3.7 6.7 L8.4 2.0" fill="none" stroke="#3a3a3a" stroke-width="1.15"/></svg>
<div class="t" style="top:433.90px;left:549.3px;letter-spacing:-0.27px;">(S) Sekundärbedarf</div>
<div class="r" style="left:537px;top:445px;width:10px;height:9px;background:#fff;border:1px solid #4a4a4a;box-sizing:border-box;"></div>
<svg class="r" style="left:537px;top:445px" width="10" height="10" viewBox="0 0 10 10"><path d="M1.6 4.6 L3.7 6.7 L8.4 2.0" fill="none" stroke="#3a3a3a" stroke-width="1.15"/></svg>
<div class="t" style="top:445.30px;left:549.3px;letter-spacing:-0.19px;">(R) off. Rahmenm.</div>
<div class="r" style="left:537px;top:456px;width:10px;height:10px;background:#fff;border:1px solid #4a4a4a;box-sizing:border-box;"></div>
<svg class="r" style="left:537px;top:456px" width="10" height="10" viewBox="0 0 10 10"><path d="M1.6 4.6 L3.7 6.7 L8.4 2.0" fill="none" stroke="#3a3a3a" stroke-width="1.15"/></svg>
<div class="t" style="top:456.70px;left:549.3px;letter-spacing:-0.17px;">(Z) n.e. Planzahlen</div>
<div class="r" style="left:534px;top:469px;width:95px;height:109px;background:#fff;border:1px solid #c8c8c8;box-sizing:border-box;"></div>
<div class="t" style="top:471.30px;left:540px;letter-spacing:-0.27px;">Berechnen</div>
<div class="r" style="left:537px;top:486px;width:10px;height:9px;background:#fff;border:1px solid #4a4a4a;box-sizing:border-box;"></div>
<svg class="r" style="left:537px;top:486px" width="10" height="10" viewBox="0 0 10 10"><path d="M1.6 4.6 L3.7 6.7 L8.4 2.0" fill="none" stroke="#3a3a3a" stroke-width="1.15"/></svg>
<div class="t" style="top:486.20px;left:549.3px;letter-spacing:-0.25px;">(K) Korrektur</div>
<div class="r" style="left:537px;top:497px;width:10px;height:9px;background:#fff;border:1px solid #4a4a4a;box-sizing:border-box;"></div>
<svg class="r" style="left:537px;top:497px" width="10" height="10" viewBox="0 0 10 10"><path d="M1.6 4.6 L3.7 6.7 L8.4 2.0" fill="none" stroke="#3a3a3a" stroke-width="1.15"/></svg>
<div class="t" style="top:497.60px;left:549.3px;letter-spacing:-0.26px;">(B) Bestellung</div>
<div class="r" style="left:537px;top:508px;width:10px;height:10px;background:#fff;border:1px solid #4a4a4a;box-sizing:border-box;"></div>
<svg class="r" style="left:537px;top:508px" width="10" height="10" viewBox="0 0 10 10"><path d="M1.6 4.6 L3.7 6.7 L8.4 2.0" fill="none" stroke="#3a3a3a" stroke-width="1.15"/></svg>
<div class="t" style="top:509.00px;left:549.3px;letter-spacing:-0.25px;">(L) Lieferung</div>
<div class="r" style="left:537px;top:520px;width:10px;height:9px;background:#fff;border:1px solid #4a4a4a;box-sizing:border-box;"></div>
<svg class="r" style="left:537px;top:520px" width="10" height="10" viewBox="0 0 10 10"><path d="M1.6 4.6 L3.7 6.7 L8.4 2.0" fill="none" stroke="#3a3a3a" stroke-width="1.15"/></svg>
<div class="t" style="top:520.40px;left:549.3px;letter-spacing:-0.27px;">(V) Verbrauch</div>
<div class="r" style="left:537px;top:531px;width:10px;height:10px;background:#fff;border:1px solid #4a4a4a;box-sizing:border-box;"></div>
<svg class="r" style="left:537px;top:531px" width="10" height="10" viewBox="0 0 10 10"><path d="M1.6 4.6 L3.7 6.7 L8.4 2.0" fill="none" stroke="#3a3a3a" stroke-width="1.15"/></svg>
<div class="t" style="top:531.80px;left:549.3px;letter-spacing:-0.26px;">(P) Primärbedarf</div>
<div class="r" style="left:537px;top:543px;width:10px;height:9px;background:#fff;border:1px solid #4a4a4a;box-sizing:border-box;"></div>
<svg class="r" style="left:537px;top:542px" width="10" height="10" viewBox="0 0 10 10"><path d="M1.6 4.6 L3.7 6.7 L8.4 2.0" fill="none" stroke="#3a3a3a" stroke-width="1.15"/></svg>
<div class="t" style="top:543.20px;left:549.3px;letter-spacing:-0.27px;">(S) Sekundärbedarf</div>
<div class="r" style="left:537px;top:554px;width:10px;height:9px;background:#fff;border:1px solid #4a4a4a;box-sizing:border-box;"></div>
<div class="t" style="top:554.60px;left:549.3px;letter-spacing:-0.19px;">(R) off. Rahmenm.</div>
<div class="r" style="left:537px;top:565px;width:10px;height:10px;background:#fff;border:1px solid #4a4a4a;box-sizing:border-box;"></div>
<svg class="r" style="left:537px;top:565px" width="10" height="10" viewBox="0 0 10 10"><path d="M1.6 4.6 L3.7 6.7 L8.4 2.0" fill="none" stroke="#3a3a3a" stroke-width="1.15"/></svg>
<div class="t" style="top:566.00px;left:549.3px;letter-spacing:-0.17px;">(Z) n.e. Planzahlen</div>
<div class="r" style="left:4px;top:511px;width:83px;height:46px;background:#e3e3e3;"></div>
<div class="r" style="left:4px;top:522px;width:114px;height:12px;background:#e3e3e3;"></div>
<div class="r" style="left:4px;top:545px;width:114px;height:12px;background:#e3e3e3;"></div>
<div class="t" style="top:512.40px;left:4.8px;letter-spacing:-0.26px;">Lagerbestand (Stk)</div>
<div class="t" style="top:523.70px;left:7.1px;letter-spacing:-0.26px;">Wiederbeschaffungszeit (Tage)</div>
<div class="t" style="top:534.90px;left:7.1px;letter-spacing:-0.26px;">Meldebestand</div>
<div class="t" style="top:546.40px;left:7.1px;letter-spacing:-0.23px;">Eindeckfaktor</div>
<div class="t" style="top:512.70px;left:123.00px;width:30px;text-align:right;letter-spacing:-0.18px;">2</div>
<div class="t" style="top:524.10px;left:124.80px;width:30px;text-align:right;letter-spacing:-0.18px;">20</div>
<div class="t" style="top:535.30px;left:124.00px;width:30px;text-align:right;letter-spacing:-0.18px;">5</div>
<div class="t" style="top:546.70px;left:124.00px;width:30px;text-align:right;letter-spacing:-0.18px;">0</div>
<div class="r" style="left:164px;top:511px;width:65px;height:46px;background:#e3e3e3;"></div>
<div class="t" style="top:512.40px;left:166.1px;letter-spacing:-0.24px;">3-Monatsschnitt</div>
<div class="t" style="top:523.70px;left:166.1px;letter-spacing:-0.24px;">12-Monatsschnitt</div>
<div class="t" style="top:534.90px;left:166.1px;letter-spacing:-0.24px;">Reichweite 3</div>
<div class="t" style="top:546.40px;left:166.1px;letter-spacing:-0.23px;">Reichweite 12</div>
<div class="t" style="top:512.70px;left:263.50px;width:40px;text-align:right;letter-spacing:-0.03px;">0,000</div>
<div class="t" style="top:524.10px;left:263.50px;width:40px;text-align:right;letter-spacing:-0.03px;">0,000</div>
<div class="t" style="top:535.30px;left:263.50px;width:40px;text-align:right;letter-spacing:-0.03px;">0,000</div>
<div class="t" style="top:546.70px;left:263.50px;width:40px;text-align:right;letter-spacing:-0.03px;">0,000</div>
<div class="r" style="left:315px;top:511px;width:92px;height:12px;background:#e3e3e3;"></div>
<div class="t" style="top:512.90px;left:317.5px;letter-spacing:-0.24px;">Lagerumschlagshäufigkeit</div>
<div class="t" style="top:524.30px;left:365.50px;width:40px;text-align:right;letter-spacing:-0.03px;">0,000</div>
<div class="r" style="left:315px;top:534px;width:92px;height:11px;background:#e3e3e3;"></div>
<div class="t" style="top:535.40px;left:317.5px;letter-spacing:-0.25px;">Produktionsgebinde</div>
<div class="t" style="top:546.70px;left:366.00px;width:40px;text-align:right;letter-spacing:-0.18px;">4</div>
<div class="r" style="left:418px;top:534px;width:84px;height:11px;background:#e3e3e3;"></div>
<div class="t" style="top:535.40px;left:419.5px;letter-spacing:-0.20px;">Urspr. Bedarfswert</div>
<div class="t" style="top:546.70px;left:461.20px;width:40px;text-align:right;letter-spacing:-0.03px;">4,000</div>
<div class="t" style="top:565.30px;left:6px;letter-spacing:-0.21px;">4 Datensätze gefunden.</div>
<div class="r" style="left:446px;top:583px;width:55px;height:16px;background:#e1e1e1;border:1px solid #adadad;box-sizing:border-box;"></div>
<div class="r" style="left:508px;top:583px;width:55px;height:16px;background:#e1e1e1;border:1px solid #adadad;box-sizing:border-box;"></div>
<div class="r" style="left:569px;top:583px;width:55px;height:16px;background:#e1e1e1;border:1px solid #adadad;box-sizing:border-box;"></div>
<div class="r" style="left:0px;top:0px;width:0px;height:0px;"></div>
<div class="t" style="top:587.20px;left:445.0px;width:55px;text-align:center;letter-spacing:-0.25px;">S<u>p</u>eichern</div>
<div class="t" style="top:587.20px;left:507.0px;width:55px;text-align:center;letter-spacing:-0.25px;"><u>V</u>erwerfen</div>
<div class="t" style="top:587.20px;left:568.5px;width:40px;text-align:center;letter-spacing:-0.26px;"><u>O</u>ptionen</div>
<svg class="r" style="left:612px;top:588px" width="9" height="6"><path d="M0.5 1 L8 1 L4.25 5 Z" fill="#111"/></svg>
<div class="r" style="left:659px;top:268px;width:274px;height:234px;background:#fff;border:1px solid #c8c8c8;box-sizing:border-box;"></div>
<div class="r" style="left:676px;top:263px;width:102px;height:11px;background:#e3e3e3;"></div>
<div class="t" style="top:264.90px;left:677.9px;letter-spacing:-0.26px;">Verbrauchswerte (Stk)</div>
<div class="r" style="left:665px;top:278px;width:263px;height:173px;background:#fff;border:1px solid #c8c8c8;box-sizing:border-box;"></div>
<div class="r" style="left:666px;top:279px;width:261px;height:11px;background:#e9e9e9;"></div>
<div class="r" style="left:666px;top:290px;width:249px;height:1px;background:#fafafa;"></div>
<div class="t" style="top:280.90px;left:681.0px;letter-spacing:-0.25px;">Periode</div>
<div class="t" style="top:280.90px;left:713.7px;letter-spacing:-0.25px;">Verkauf</div>
<div class="t" style="top:280.90px;left:760.8px;letter-spacing:-0.24px;">Produktion</div>
<div class="t" style="top:280.90px;left:817.1px;letter-spacing:-0.25px;">Manuell</div>
<div class="t" style="top:280.90px;left:864.6px;letter-spacing:-0.27px;">AnfangsLB</div>
<div class="r" style="left:915px;top:279px;width:1px;height:11px;background:#d0d0d0;"></div>
<div class="r" style="left:666px;top:291px;width:13px;height:159px;background:#f0f0f0;"></div>
<div class="r" style="left:816px;top:291px;width:47px;height:135px;background:#dedef9;"></div>
<div class="r" style="left:680px;top:301px;width:235px;height:1px;background:#9a9a9a;"></div>
<div class="r" style="left:667px;top:301px;width:11px;height:1px;background:#a8a8a8;"></div>
<div class="t" style="top:292.30px;left:681.3px;letter-spacing:-0.18px;">2021004</div>
<div class="t" style="top:292.30px;left:714.0px;">0,00</div>
<div class="t" style="top:292.30px;left:761.0999999999999px;">0,00</div>
<div class="t" style="top:292.30px;left:817.4px;">0,00</div>
<div class="t" style="top:292.30px;left:864.9px;">0,00</div>
<div class="r" style="left:680px;top:312px;width:235px;height:1px;background:#9a9a9a;"></div>
<div class="r" style="left:667px;top:312px;width:11px;height:1px;background:#a8a8a8;"></div>
<div class="t" style="top:303.58px;left:681.3px;letter-spacing:-0.18px;">2021003</div>
<div class="t" style="top:303.58px;left:714.0px;">0,00</div>
<div class="t" style="top:303.58px;left:761.0999999999999px;">0,00</div>
<div class="t" style="top:303.58px;left:817.4px;">0,00</div>
<div class="t" style="top:303.58px;left:864.9px;">0,00</div>
<div class="r" style="left:680px;top:323px;width:235px;height:1px;background:#9a9a9a;"></div>
<div class="r" style="left:667px;top:323px;width:11px;height:1px;background:#a8a8a8;"></div>
<div class="t" style="top:314.86px;left:681.3px;letter-spacing:-0.18px;">2021002</div>
<div class="t" style="top:314.86px;left:714.0px;">0,00</div>
<div class="t" style="top:314.86px;left:761.0999999999999px;">0,00</div>
<div class="t" style="top:314.86px;left:817.4px;">0,00</div>
<div class="t" style="top:314.86px;left:864.9px;">0,00</div>
<div class="r" style="left:680px;top:335px;width:235px;height:1px;background:#9a9a9a;"></div>
<div class="r" style="left:667px;top:335px;width:11px;height:1px;background:#a8a8a8;"></div>
<div class="t" style="top:326.14px;left:681.3px;letter-spacing:-0.18px;">2021001</div>
<div class="t" style="top:326.14px;left:714.0px;">0,00</div>
<div class="t" style="top:326.14px;left:761.0999999999999px;">0,00</div>
<div class="t" style="top:326.14px;left:817.4px;">0,00</div>
<div class="t" style="top:326.14px;left:864.9px;">0,00</div>
<div class="r" style="left:680px;top:346px;width:235px;height:1px;background:#9a9a9a;"></div>
<div class="r" style="left:667px;top:346px;width:11px;height:1px;background:#a8a8a8;"></div>
<div class="t" style="top:337.42px;left:681.3px;letter-spacing:-0.18px;">2020012</div>
<div class="t" style="top:337.42px;left:714.0px;">0,00</div>
<div class="t" style="top:337.42px;left:761.0999999999999px;">0,00</div>
<div class="t" style="top:337.42px;left:817.4px;">0,00</div>
<div class="t" style="top:337.42px;left:864.9px;">0,00</div>
<div class="r" style="left:680px;top:357px;width:235px;height:1px;background:#9a9a9a;"></div>
<div class="r" style="left:667px;top:357px;width:11px;height:1px;background:#a8a8a8;"></div>
<div class="t" style="top:348.70px;left:681.3px;letter-spacing:-0.18px;">2020011</div>
<div class="t" style="top:348.70px;left:714.0px;">0,00</div>
<div class="t" style="top:348.70px;left:761.0999999999999px;">0,00</div>
<div class="t" style="top:348.70px;left:817.4px;">0,00</div>
<div class="t" style="top:348.70px;left:864.9px;">0,00</div>
<div class="r" style="left:680px;top:368px;width:235px;height:1px;background:#9a9a9a;"></div>
<div class="r" style="left:667px;top:368px;width:11px;height:1px;background:#a8a8a8;"></div>
<div class="t" style="top:359.98px;left:681.3px;letter-spacing:-0.18px;">2020010</div>
<div class="t" style="top:359.98px;left:714.0px;">0,00</div>
<div class="t" style="top:359.98px;left:761.0999999999999px;">0,00</div>
<div class="t" style="top:359.98px;left:817.4px;">0,00</div>
<div class="t" style="top:359.98px;left:864.9px;">0,00</div>
<div class="r" style="left:680px;top:380px;width:235px;height:1px;background:#9a9a9a;"></div>
<div class="r" style="left:667px;top:380px;width:11px;height:1px;background:#a8a8a8;"></div>
<div class="t" style="top:371.26px;left:681.3px;letter-spacing:-0.18px;">2020009</div>
<div class="t" style="top:371.26px;left:714.0px;">0,00</div>
<div class="t" style="top:371.26px;left:761.0999999999999px;">0,00</div>
<div class="t" style="top:371.26px;left:817.4px;">0,00</div>
<div class="t" style="top:371.26px;left:864.9px;">0,00</div>
<div class="r" style="left:680px;top:391px;width:235px;height:1px;background:#9a9a9a;"></div>
<div class="r" style="left:667px;top:391px;width:11px;height:1px;background:#a8a8a8;"></div>
<div class="t" style="top:382.54px;left:681.3px;letter-spacing:-0.18px;">2020008</div>
<div class="t" style="top:382.54px;left:714.0px;">0,00</div>
<div class="t" style="top:382.54px;left:761.0999999999999px;">0,00</div>
<div class="t" style="top:382.54px;left:817.4px;">0,00</div>
<div class="t" style="top:382.54px;left:864.9px;">0,00</div>
<div class="r" style="left:680px;top:402px;width:235px;height:1px;background:#9a9a9a;"></div>
<div class="r" style="left:667px;top:402px;width:11px;height:1px;background:#a8a8a8;"></div>
<div class="t" style="top:393.82px;left:681.3px;letter-spacing:-0.18px;">2020007</div>
<div class="t" style="top:393.82px;left:714.0px;">0,00</div>
<div class="t" style="top:393.82px;left:761.0999999999999px;">0,00</div>
<div class="t" style="top:393.82px;left:817.4px;">0,00</div>
<div class="t" style="top:393.82px;left:864.9px;">0,00</div>
<div class="r" style="left:680px;top:414px;width:235px;height:1px;background:#9a9a9a;"></div>
<div class="r" style="left:667px;top:414px;width:11px;height:1px;background:#a8a8a8;"></div>
<div class="t" style="top:405.10px;left:681.3px;letter-spacing:-0.18px;">2020006</div>
<div class="t" style="top:405.10px;left:714.0px;">0,00</div>
<div class="t" style="top:405.10px;left:761.0999999999999px;">0,00</div>
<div class="t" style="top:405.10px;left:817.4px;">0,00</div>
<div class="t" style="top:405.10px;left:864.9px;">0,00</div>
<div class="r" style="left:680px;top:425px;width:235px;height:1px;background:#9a9a9a;"></div>
<div class="r" style="left:667px;top:425px;width:11px;height:1px;background:#a8a8a8;"></div>
<div class="t" style="top:416.38px;left:681.3px;letter-spacing:-0.18px;">2020005</div>
<div class="t" style="top:416.38px;left:714.0px;">0,00</div>
<div class="t" style="top:416.38px;left:761.0999999999999px;">0,00</div>
<div class="t" style="top:416.38px;left:817.4px;">0,00</div>
<div class="t" style="top:416.38px;left:864.9px;">0,00</div>
<div class="r" style="left:680px;top:291px;width:1px;height:135px;background:#9a9a9a;"></div>
<div class="r" style="left:712px;top:291px;width:1px;height:135px;background:#9a9a9a;"></div>
<div class="r" style="left:759px;top:291px;width:1px;height:135px;background:#9a9a9a;"></div>
<div class="r" style="left:816px;top:291px;width:1px;height:135px;background:#9a9a9a;"></div>
<div class="r" style="left:863px;top:291px;width:1px;height:135px;background:#9a9a9a;"></div>
<div class="r" style="left:915px;top:291px;width:1px;height:135px;background:#9a9a9a;"></div>
<div class="r" style="left:915px;top:291px;width:1px;height:135px;background:#9a9a9a;"></div>
<div class="r" style="left:680px;top:425px;width:1px;height:25px;background:#a8a8a8;"></div>
<svg class="r" style="left:673px;top:293px" width="5" height="6"><path d="M0 0 L4.6 3 L0 6 Z" fill="#000"/></svg>
<div class="r" style="left:666px;top:457px;width:47px;height:11px;background:#e3e3e3;"></div>
<div class="t" style="top:458.60px;left:667.5px;letter-spacing:-0.34px;">Summen</div>
<div class="r" style="left:713px;top:457px;width:46px;height:11px;background:#fff;border:1px solid #f0f0f0;box-sizing:border-box;"></div>
<div class="r" style="left:759px;top:457px;width:57px;height:11px;background:#fff;border:1px solid #f0f0f0;box-sizing:border-box;"></div>
<div class="r" style="left:816px;top:457px;width:49px;height:11px;background:#fff;border:1px solid #f0f0f0;box-sizing:border-box;"></div>
<div class="t" style="top:458.60px;left:713.6px;">0,00</div>
<div class="t" style="top:458.60px;left:760.5px;">0,00</div>
<div class="t" style="top:458.60px;left:816.6px;">0,00</div>
<div class="r" style="left:666px;top:474px;width:93px;height:22px;background:#e3e3e3;"></div>
<div class="t" style="top:475.30px;left:667.5px;letter-spacing:-0.27px;">Gesamtverbrauch</div>
<div class="t" style="top:486.50px;left:667.5px;letter-spacing:-0.22px;">durchschn. Lagerbestand</div>
<div class="r" style="left:759px;top:474px;width:67px;height:11px;background:#fff;border:1px solid #f0f0f0;box-sizing:border-box;"></div>
<div class="r" style="left:826px;top:474px;width:39px;height:11px;background:#fff;border:1px solid #f0f0f0;box-sizing:border-box;"></div>
<div class="r" style="left:759px;top:485px;width:67px;height:11px;background:#fff;border:1px solid #f0f0f0;box-sizing:border-box;"></div>
<div class="r" style="left:826px;top:485px;width:39px;height:11px;background:#fff;border:1px solid #f0f0f0;box-sizing:border-box;"></div>
<div class="t" style="top:475.30px;left:760.5px;">0,00</div>
<div class="t" style="top:486.50px;left:760.5px;">0,00</div>
<div class="t" style="top:475.30px;left:827px;letter-spacing:-0.24px;">Stk</div>
<div class="t" style="top:486.50px;left:827px;letter-spacing:-0.24px;">Stk</div>
</body></html>
